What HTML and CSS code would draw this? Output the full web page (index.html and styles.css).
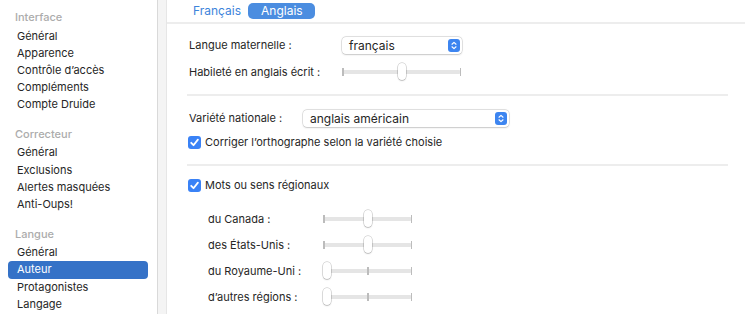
FILE: index.html
```html
<!DOCTYPE html>
<html>
<head>
    <title>Préférences — Auteur</title>
    <link rel="stylesheet" href="styles.css">
</head>
<body>
    <div class="window">
        <nav class="sidebar">
            <div class="group">
                <div class="group-title">Interface</div>
                <ul class="items">
                    <li>Général</li>
                    <li>Apparence</li>
                    <li>Contrôle d’accès</li>
                    <li>Compléments</li>
                    <li>Compte Druide</li>
                </ul>
            </div>
            <div class="group">
                <div class="group-title">Correcteur</div>
                <ul class="items">
                    <li>Général</li>
                    <li>Exclusions</li>
                    <li>Alertes masquées</li>
                    <li>Anti-Oups!</li>
                </ul>
            </div>
            <div class="group">
                <div class="group-title">Langue</div>
                <ul class="items">
                    <li>Général</li>
                    <li class="selected">Auteur</li>
                    <li>Protagonistes</li>
                    <li>Langage</li>
                </ul>
            </div>
        </nav>

        <div class="divider"></div>

        <main class="pane">
            <div class="tabs">
                <span class="tab">Français</span>
                <span class="tab active">Anglais</span>
            </div>

            <div class="content">
                <!-- Langue maternelle / habileté -->
                <div class="row first">
                    <span class="label label-main">Langue maternelle :</span>
                    <div class="popup popup-mother">
                        <span>français</span>
                        <span class="stepper">
                            <svg width="12" height="13" viewBox="0 0 12 13"><path d="M4 5.2 L6 3.4 L8 5.2 M4 7.8 L6 9.6 L8 7.8" fill="none" stroke="#fff" stroke-width="1.2" stroke-linecap="round" stroke-linejoin="round"/></svg>
                        </span>
                    </div>
                </div>
                <div class="row">
                    <span class="label label-main">Habileté en anglais écrit :</span>
                    <div class="slider slider-wide">
                        <div class="track"></div>
                        <span class="tick tick-start"></span>
                        <span class="tick tick-end"></span>
                        <span class="knob" style="left: calc(50% - 4px)"></span>
                    </div>
                </div>

                <div class="sep"></div>

                <!-- Variété nationale -->
                <div class="row after-sep">
                    <span class="label label-var">Variété nationale :</span>
                    <div class="popup popup-var">
                        <span>anglais américain</span>
                        <span class="stepper">
                            <svg width="12" height="13" viewBox="0 0 12 13"><path d="M4 5.2 L6 3.4 L8 5.2 M4 7.8 L6 9.6 L8 7.8" fill="none" stroke="#fff" stroke-width="1.2" stroke-linecap="round" stroke-linejoin="round"/></svg>
                        </span>
                    </div>
                </div>
                <label class="check-row">
                    <span class="checkbox">
                        <svg width="13" height="13" viewBox="0 0 13 13"><path d="M3.2 6.8 L5.5 9.2 L9.9 3.6" fill="none" stroke="#fff" stroke-width="1.8" stroke-linecap="round" stroke-linejoin="round"/></svg>
                    </span>
                    Corriger l’orthographe selon la variété choisie
                </label>

                <div class="sep sep-second"></div>

                <!-- Mots régionaux -->
                <label class="check-row regional-toggle">
                    <span class="checkbox">
                        <svg width="13" height="13" viewBox="0 0 13 13"><path d="M3.2 6.8 L5.5 9.2 L9.9 3.6" fill="none" stroke="#fff" stroke-width="1.8" stroke-linecap="round" stroke-linejoin="round"/></svg>
                    </span>
                    Mots ou sens régionaux
                </label>

                <div class="regions">
                    <div class="region-row">
                        <span class="label label-region">du Canada :</span>
                        <div class="slider slider-small">
                            <div class="track"></div>
                            <span class="tick tick-start"></span>
                            <span class="tick tick-mid"></span>
                            <span class="tick tick-end"></span>
                            <span class="knob" style="left: calc(50% - 4px)"></span>
                        </div>
                    </div>
                    <div class="region-row">
                        <span class="label label-region">des États-Unis :</span>
                        <div class="slider slider-small">
                            <div class="track"></div>
                            <span class="tick tick-start"></span>
                            <span class="tick tick-mid"></span>
                            <span class="tick tick-end"></span>
                            <span class="knob" style="left: calc(50% - 4px)"></span>
                        </div>
                    </div>
                    <div class="region-row">
                        <span class="label label-region">du Royaume-Uni :</span>
                        <div class="slider slider-small">
                            <div class="track"></div>
                            <span class="tick tick-start"></span>
                            <span class="tick tick-mid"></span>
                            <span class="tick tick-end"></span>
                            <span class="knob" style="left: 0"></span>
                        </div>
                    </div>
                    <div class="region-row">
                        <span class="label label-region">d’autres régions :</span>
                        <div class="slider slider-small">
                            <div class="track"></div>
                            <span class="tick tick-start"></span>
                            <span class="tick tick-mid"></span>
                            <span class="tick tick-end"></span>
                            <span class="knob" style="left: 0"></span>
                        </div>
                    </div>
                </div>
            </div>
        </main>
    </div>
</body>
</html>
```

FILE: styles.css
```css
body {
    margin: 0;
    font-family: Inter, "Liberation Sans", sans-serif;
    font-size: 11px;
    color: #262626;
    background-color: #fff;
}
.window {
    display: flex;
    height: 314px;
    overflow: hidden;
}

/* Sidebar */
.sidebar {
    width: 157px;
    flex: none;
    padding-top: 9px;
    box-sizing: border-box;
}
.group + .group {
    margin-top: 12.5px;
}
.group-title {
    padding-left: 15px;
    line-height: 17px;
    margin-bottom: 1.5px;
    color: #acacac;
    font-weight: 500;
}
.items {
    list-style: none;
    margin: 0;
    padding: 0;
}
.items li {
    margin-left: 8px;
    width: 140px;
    height: 17.2px;
    padding-left: 9px;
    line-height: 17.2px;
    border-radius: 4px;
    box-sizing: border-box;
}
.items li.selected {
    background-color: #3572c7;
    color: #fff;
}
.divider {
    width: 10px;
    flex: none;
    background-color: #f4f4f4;
    border-left: 1px solid #d9d9d9;
    border-right: 1px solid #e6e6e6;
    box-sizing: border-box;
}

/* Main pane */
.pane {
    flex: 1;
    min-width: 0;
}
.tabs {
    display: flex;
    align-items: center;
    height: 22px;
    padding-left: 26px;
    gap: 7px;
    border-bottom: 2px solid #ededed;
    font-size: 12px;
}
.tab {
    color: #3d84db;
    line-height: 16px;
}
.tab.active {
    background-color: #4b8de0;
    color: #fff;
    padding: 0 12px 0 13px;
    border-radius: 5px;
}
.content {
    padding: 0 17px 0 20px;
}
.row {
    display: flex;
    align-items: center;
    height: 26px;
    padding-left: 2px;
}
.row + .row {
    margin-top: 1px;
}
.row.first {
    margin-top: 8px;
}
.row.after-sep {
    margin-top: 9px;
}
.label {
    flex: none;
}
.label-main {
    width: 153px;
}
.label-var {
    width: 114px;
}
.sep {
    height: 2px;
    background-color: #ededed;
    margin-top: 9px;
}
.sep-second {
    margin-top: 11px;
}

/* Popup buttons */
.popup {
    display: flex;
    align-items: center;
    justify-content: space-between;
    height: 17px;
    padding: 0 2px 0 7px;
    border-radius: 4px;
    background-color: #fff;
    box-shadow: 0 0 0 0.5px rgba(0,0,0,0.18), 0 0.5px 2px rgba(0,0,0,0.14);
    box-sizing: border-box;
    font-size: 12px;
}
.popup-mother {
    width: 120px;
}
.popup-var {
    width: 206px;
}
.stepper {
    display: flex;
    width: 12px;
    height: 13px;
    border-radius: 3px;
    background-color: #3d85f0;
}

/* Checkboxes */
.check-row {
    display: flex;
    align-items: center;
    gap: 4px;
    height: 22px;
    padding-left: 1px;
}
.regional-toggle {
    margin-top: 8px;
}
.checkbox {
    display: flex;
    width: 13px;
    height: 13px;
    border-radius: 3px;
    background-color: #3a82f6;
}

/* Sliders */
.slider {
    position: relative;
    height: 18px;
}
.slider-wide {
    width: 119px;
}
.slider-small {
    width: 89px;
}
.track {
    position: absolute;
    left: 0;
    right: 0;
    top: 7px;
    height: 4px;
    border-radius: 2px;
    background-color: #e5e5e5;
}
.tick {
    position: absolute;
    top: 5px;
    width: 1.5px;
    height: 8px;
    background-color: #bcbcbc;
}
.tick-start {
    left: 0;
}
.tick-end {
    right: 0;
}
.tick-mid {
    left: 44px;
}
.knob {
    position: absolute;
    top: 0;
    width: 8px;
    height: 17px;
    border-radius: 4px;
    background-color: #fff;
    box-shadow: 0 0 0 0.5px rgba(0,0,0,0.25), 0 1px 1.5px rgba(0,0,0,0.15);
}

/* Regional words */
.regions {
    margin-top: 10px;
}
.region-row {
    display: flex;
    align-items: center;
    height: 26px;
    padding-left: 21px;
}
.label-region {
    width: 115px;
}
```
